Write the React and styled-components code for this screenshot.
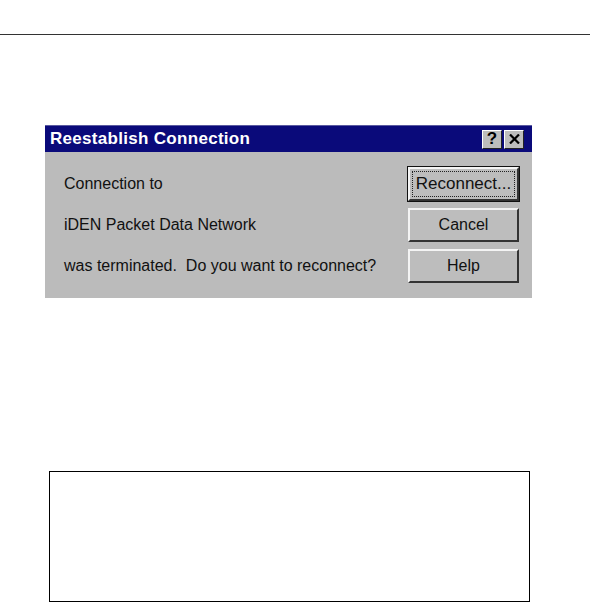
import React from 'react'
import styled, { createGlobalStyle } from 'styled-components'

const GlobalStyle = createGlobalStyle`
  html, body {
    margin: 0;
    padding: 0;
    background: #ffffff;
  }
  body {
    font-family: "Liberation Sans", Arial, sans-serif;
  }
`

const rows = [
  { text: 'Connection to', label: 'Reconnect...', primary: true },
  { text: 'iDEN Packet Data Network', label: 'Cancel' },
  { text: 'was terminated.\u00a0 Do you want to reconnect?', label: 'Help' }
]

export default function App() {
  return (
    <Page>
      <GlobalStyle />
      <Rule />
      <Dialog>
        <TitleBar>
          <Title>Reestablish Connection</Title>
          <TitleButtons>
            <TitleButton>?</TitleButton>
            <TitleButton>
              <svg width="11" height="10" viewBox="0 0 11 10">
                <path d="M1 0.5 L10 9.5 M10 0.5 L1 9.5" stroke="#000" strokeWidth="2.2" />
              </svg>
            </TitleButton>
          </TitleButtons>
        </TitleBar>
        <Body>
          {rows.map((row) => (
            <React.Fragment key={row.label}>
              <Message>{row.text}</Message>
              <Button $primary={row.primary}>
                {row.primary ? <Focus>{row.label}</Focus> : row.label}
              </Button>
            </React.Fragment>
          ))}
        </Body>
      </Dialog>
      <Frame />
    </Page>
  )
}

const Page = styled.div`
  width: 590px;
  height: 602px;
  overflow: hidden;
  padding-top: 34px;
  box-sizing: border-box;
`

const Rule = styled.div`
  height: 1px;
  background: #333333;
`

const Dialog = styled.div`
  margin: 90px 0 0 45px;
  width: 487px;
  height: 173px;
  background: #bbbbbb;
  display: flex;
  flex-direction: column;
`

const TitleBar = styled.div`
  height: 27px;
  background: #0a0a7a;
  display: flex;
  align-items: center;
  justify-content: space-between;
  padding: 0 8px 0 5px;
  border-top: 1px solid #5a5aa0;
  box-sizing: border-box;
`

const Title = styled.span`
  color: #ffffff;
  font-weight: bold;
  font-size: 17px;
  letter-spacing: 0.3px;
`

const TitleButtons = styled.div`
  display: flex;
  gap: 2px;
`

const TitleButton = styled.div`
  width: 20px;
  height: 19px;
  box-sizing: border-box;
  background: #bdbdbd;
  border-top: 1px solid #ffffff;
  border-left: 1px solid #ffffff;
  border-right: 1px solid #222222;
  border-bottom: 1px solid #222222;
  display: flex;
  align-items: center;
  justify-content: center;
  font-weight: bold;
  font-size: 17px;
  color: #000000;
`

const Body = styled.div`
  flex: 1;
  display: grid;
  grid-template-columns: 1fr 111px;
  grid-auto-rows: 34px;
  row-gap: 7px;
  padding: 15px 13px 0 19px;
`

const Message = styled.div`
  display: flex;
  align-items: center;
  font-size: 16px;
  color: #111111;
  white-space: nowrap;
`

const Button = styled.div`
  box-sizing: border-box;
  display: flex;
  align-items: center;
  justify-content: center;
  font-size: 16px;
  color: #111111;
  background: #bdbdbd;
  border-top: 2px solid #f4f4f4;
  border-left: 2px solid #f4f4f4;
  border-right: 2px solid #333333;
  border-bottom: 2px solid #333333;
  box-shadow: ${(p) => (p.$primary ? '0 0 0 1px #111111' : 'none')};
  padding: ${(p) => (p.$primary ? '2px' : '0')};
`

const Focus = styled.span`
  flex: 1;
  align-self: stretch;
  display: flex;
  align-items: center;
  justify-content: center;
  font-size: 17px;
  border: 1px dotted #222222;
`

const Frame = styled.div`
  margin: 173px 0 0 49px;
  width: 481px;
  height: 131px;
  box-sizing: border-box;
  border: 1px solid #000000;
`
